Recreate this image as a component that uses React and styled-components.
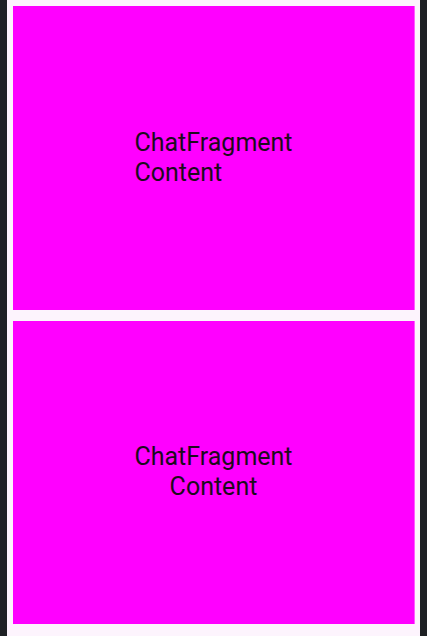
import styled, { createGlobalStyle } from "styled-components";

const GlobalStyle = createGlobalStyle`
  html, body {
    margin: 0;
    padding: 0;
    background: #1e2124;
  }
  #root {
    height: 636px;
  }
`;

const Screen = styled.div`
  display: flex;
  height: 636px;
  background: #1e2124;
`;

const Edge = styled.div`
  width: 7px;
  flex-shrink: 0;
  background: #1e2124;
`;

const Content = styled.div`
  flex: 1;
  display: flex;
  flex-direction: column;
  gap: 11px;
  padding: 6px 5px 12px 6px;
  background: #fdf4fd;
`;

const Panel = styled.div`
  flex: 1;
  display: flex;
  align-items: center;
  justify-content: center;
  background: #ff00ff;
  border-right: 1px solid #ff5cff;
`;

const Label = styled.div`
  width: min-content;
  font-family: Roboto, "Noto Sans", sans-serif;
  font-size: 25px;
  line-height: 30px;
  color: #1c0b1c;
  text-align: ${(p) => (p.$center ? "center" : "left")};
`;

const App = () => {
  return (
    <>
      <GlobalStyle />
      <Screen>
        <Edge />
        <Content>
          <Panel>
            <Label>ChatFragment Content</Label>
          </Panel>
          <Panel>
            <Label $center>ChatFragment Content</Label>
          </Panel>
        </Content>
        <Edge />
      </Screen>
    </>
  );
};

export default App;
